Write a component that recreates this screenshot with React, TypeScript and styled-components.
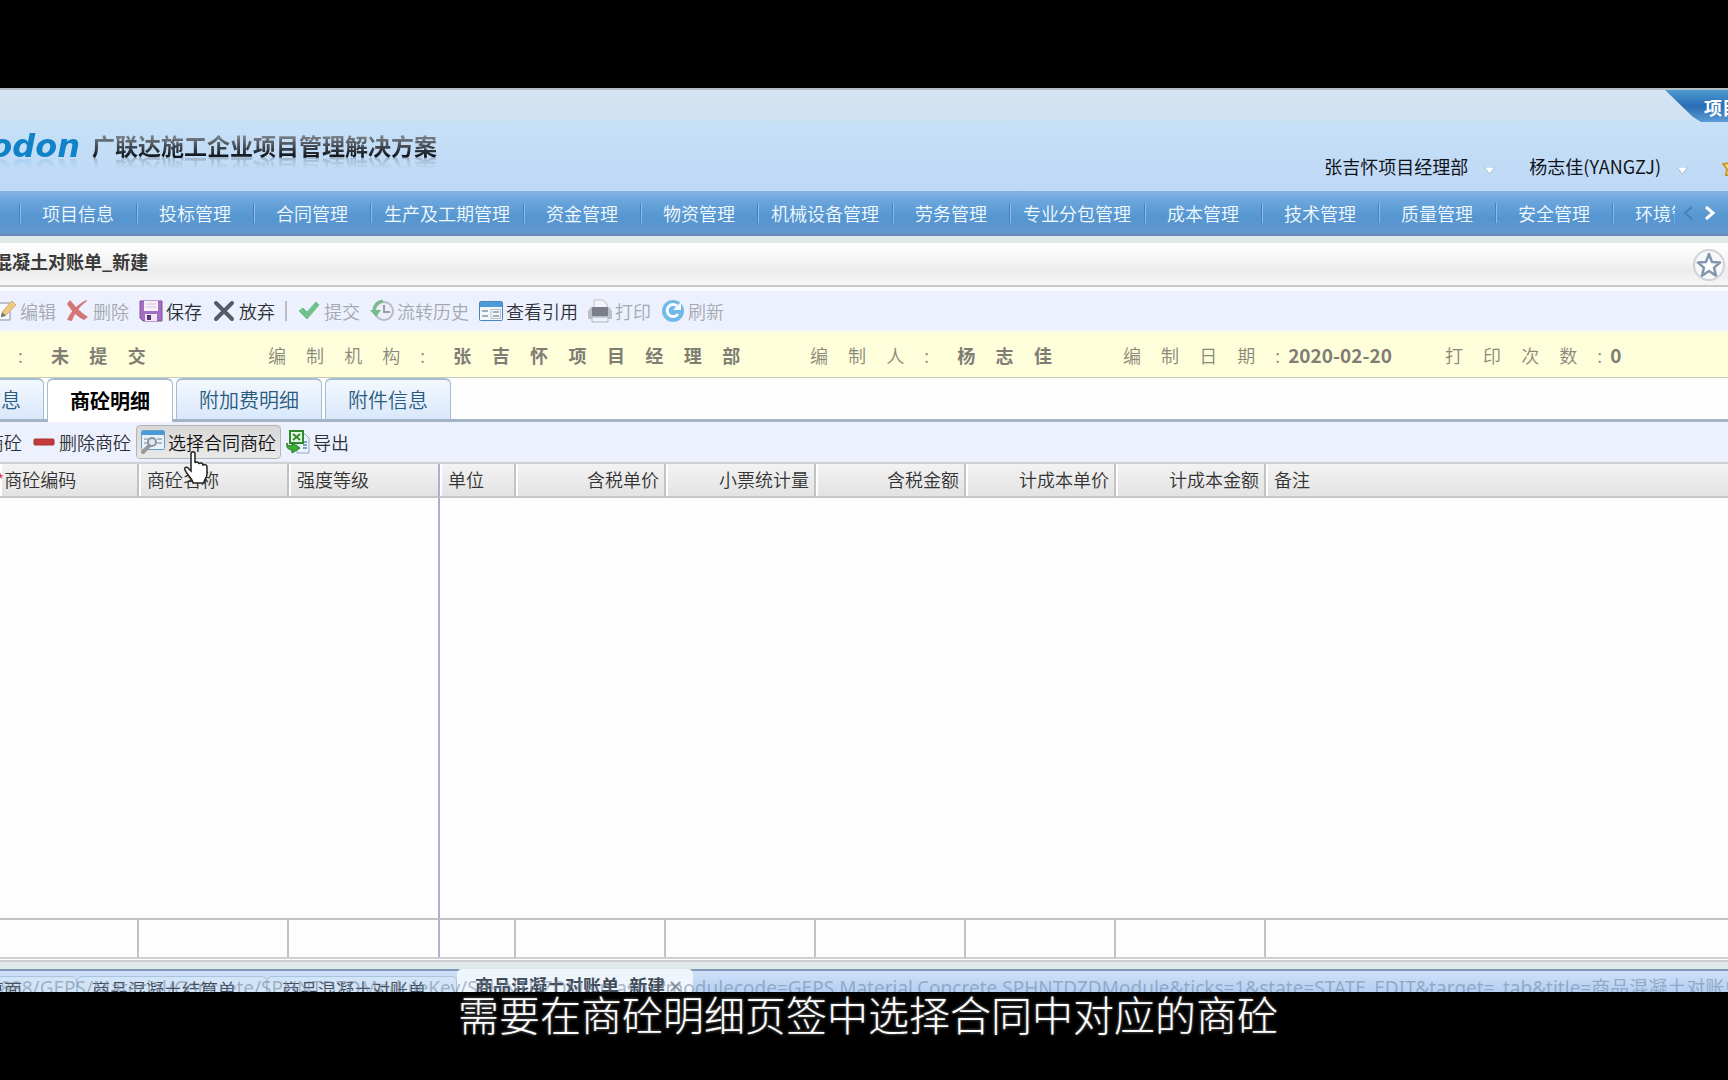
import React from 'react';
import styled, { createGlobalStyle, css } from 'styled-components';

const Global = createGlobalStyle`
  *, *::before, *::after { box-sizing: border-box; }
  body { margin: 0; background: #000; overflow: hidden; }
  button, select, input { font: inherit; }
  button { border: 0; background: none; padding: 0; color: inherit; cursor: pointer; white-space: nowrap; }
  a { color: inherit; text-decoration: none; }
`;

const Frame = styled.div`
  height: 100vh;
  display: flex;
  flex-direction: column;
  background: #000;
  font: 350 18px/24px "Noto Sans CJK SC", "Noto Sans", sans-serif;
  color: #333;
`;

const Screen = styled.div`
  flex: 1;
  min-height: 0;
  margin-top: 88px;
  display: flex;
  flex-direction: column;
  overflow: hidden;
  background: #fdfdfd;
  border-top: 2px solid #b4bcc4;
`;

const Header = styled.header`
  flex: none;
  height: 101px;
  display: flex;
  justify-content: space-between;
  overflow: hidden;
  background: linear-gradient(#d6e4f2, #cfe1f2 28%, #c5e0f7 34%, #bfd8f6);
`;

const Brand = styled.div`
  display: flex;
  align-items: center;
  padding-top: 8px;
`;

const Logo = styled.div`
  width: 80px;
  height: 40px;
  display: flex;
  justify-content: flex-end;
  overflow: hidden;
  font: italic 700 32px/42px "DejaVu Sans", sans-serif;
  color: #0f82c8;
  -webkit-box-reflect: below -14px linear-gradient(transparent 55%, rgba(0, 0, 0, 0.25));
`;

const Slogan = styled.h1`
  margin: 0 0 0 12px;
  font: 700 23px/32px "Noto Sans CJK SC", sans-serif;
  color: transparent;
  background: linear-gradient(#7f878f 20%, #3a4048 60%, #11161c 85%);
  background-clip: text;
  -webkit-background-clip: text;
  -webkit-box-reflect: below -8px linear-gradient(transparent 50%, rgba(0, 0, 0, 0.3));
`;

const HeaderSide = styled.div`
  display: flex;
  flex-direction: column;
  align-items: flex-end;
  justify-content: space-between;
  padding-bottom: 13px;
`;

const Corner = styled.button`
  width: 63px;
  height: 32px;
  padding: 2px 0 0 39px;
  overflow: hidden;
  text-align: left;
  font-weight: 700;
  color: #fff;
  background: linear-gradient(#4d9ad0, #2a6db4 50%, #5a9bd6);
  clip-path: polygon(0 0, 100% 0, 100% 100%, 36px 100%, 28px 27px);
`;

const Account = styled.div`
  display: flex;
  align-items: center;
  font-weight: 400;
  color: #10131a;
`;

const Menu = styled.button`
  display: flex;
  align-items: center;
  gap: 16px;
  margin-right: 34px;
  svg { margin-top: 8px; }
`;

const NavBar = styled.nav`
  flex: none;
  height: 45px;
  display: flex;
  background: linear-gradient(#84b4e4, #6ba5dc 22%, #5595d0 60%, #6398cf 92%, #6688b4);
`;

const NavList = styled.div`
  flex: 1;
  min-width: 0;
  display: flex;
  align-items: center;
  overflow: hidden;
  padding: 0 0 2px 19px;
`;

const NavItem = styled.a`
  flex: none;
  min-width: 117px;
  padding: 0 13px 0 14px;
  text-align: center;
  color: #f2fbff;
  background: linear-gradient(90deg, #4a80bd 1px, #8dbce8 1px, #8dbce8 2px, transparent 2px) left center / 100% 20px no-repeat;
`;

const NavArrows = styled.div`
  flex: none;
  width: 53px;
  display: flex;
  align-items: center;
  gap: 10px;
  padding: 0 0 2px 7px;
  button { height: 24px; }
  svg { display: block; margin: 0 auto; }
`;

const TitleBar = styled.div`
  flex: none;
  height: 51px;
  display: flex;
  align-items: center;
  justify-content: space-between;
  border-top: 7px solid #e0e7e9;
  border-bottom: 2px solid #c8c8c8;
  padding-right: 2px;
  background: linear-gradient(#fff, #f4f4f4 45%, #ececec 65%, #f6f6f6);
`;

const Title = styled.h2`
  margin: 0 0 6px -6px;
  font: 700 18px/24px "Noto Sans CJK SC", sans-serif;
  color: #3a3a3a;
`;

const Star = styled.button`
  width: 34px;
  height: 34px;
  margin-top: 2px;
  svg { display: block; }
`;

const Toolbar = styled.div<{ $main?: boolean }>`
  flex: none;
  height: ${p => (p.$main ? 45 : 40)}px;
  display: flex;
  align-items: center;
  border-top: ${p => (p.$main ? 4 : 0)}px solid #fbfcff;
  border-bottom: ${p => (p.$main ? '2px solid #f4f8f6' : '1px solid #e6ebf6')};
  background: #edf1fd;
  > :first-child { margin-left: ${p => (p.$main ? -12 : -19)}px; }
`;

const Tool = styled.button<{ $on?: boolean }>`
  height: 34px;
  padding: 0 4px;
  display: flex;
  align-items: center;
  gap: 3px;
  border: 1px solid transparent;
  border-radius: 4px;
  color: #2c3038;
  svg { flex: none; }
  &:disabled { color: #a4a8b0; }
  &:disabled svg { opacity: 0.65; }
  ${p => p.$on && css`
    border-color: #b4b4b4;
    background: linear-gradient(#d8d8d8, #e9e9e9);
    color: #111;
  `}
`;

const Divider = styled.span`
  width: 2px;
  height: 20px;
  margin: 0 5px;
  background: #b9bcc4;
`;

const Info = styled.dl`
  flex: none;
  height: 46px;
  margin: 0;
  display: grid;
  grid-template-columns: 268px 542px 313px 322px 1fr;
  align-items: center;
  border-bottom: 1px solid #c9cdbb;
  background: #fefedb;
  color: #8a887a;
  white-space: pre;
  overflow: hidden;
`;

const Field = styled.div<{ $indent?: number; $numeric?: boolean }>`
  display: flex;
  gap: 8px;
  padding-left: ${p => p.$indent ?? 0}px;
  dt, dd { margin: 0; }
  dd {
    font-weight: 700;
    font-size: ${p => (p.$numeric ? 19 : 18)}px;
    color: #807e74;
  }
`;

const Tabs = styled.div`
  flex: none;
  height: 44px;
  display: flex;
  align-items: flex-end;
  gap: 3px;
  border-bottom: 3px solid #a3b4c6;
  > :first-child { margin-left: -82px; }
`;

const Tab = styled.button<{ $on?: boolean }>`
  height: 41px;
  padding: 0 22px;
  border: 1px solid #a5bdd0;
  border-width: 2px 1px 0;
  border-radius: 6px 6px 0 0;
  font-size: 20px;
  color: #2a5a80;
  background: linear-gradient(#f4f8fe, #d9e8fb);
  ${p => p.$on && css`
    height: 44px;
    margin-bottom: -3px;
    font-weight: 700;
    color: #000;
    background: #fff;
  `}
`;

const GridWrap = styled.div`
  flex: 1;
  min-height: 0;
  border-top: 2px solid #cfd3d8;
  border-bottom: 2px solid #d0d0d0;
`;

const Grid = styled.table`
  width: 100%;
  height: 100%;
  table-layout: fixed;
  border-collapse: separate;
  border-spacing: 0;
  background: #fdfdfd;
`;

const Th = styled.th<{ $right?: boolean; $frozen?: boolean }>`
  height: 34px;
  padding: ${p => (p.$right ? '0 5px 2px 0' : '0 0 2px 8px')};
  text-align: ${p => (p.$right ? 'right' : 'left')};
  font-weight: inherit;
  white-space: nowrap;
  border-right: 2px solid ${p => (p.$frozen ? '#a9aedb' : '#c2c2c2')};
  border-bottom: 2px solid #c6c6c6;
  background: linear-gradient(90deg, #fff 2px, transparent 2px), linear-gradient(#f3f3f3, #e3e3e3);
  &:first-child { padding-left: 0; }
  &:last-child { border-right: 0; }
`;

const Required = styled.span`
  color: #e03030;
  margin-left: -4px;
`;

const Blank = styled.td<{ $frozen?: boolean }>`
  padding: 0;
  border-right: ${p => (p.$frozen ? '2px solid #a9aedb' : '0')};
`;

const Sum = styled.td<{ $frozen?: boolean }>`
  height: 39px;
  padding: 0;
  border-top: 2px solid #c2c2c2;
  border-right: 2px solid ${p => (p.$frozen ? '#b0b3cf' : '#c2c2c2')};
  &:last-child { border-right: 0; }
`;

const Dock = styled.div`
  flex: none;
  height: 32px;
  position: relative;
  display: flex;
  align-items: flex-start;
  margin-top: 1px;
  overflow: hidden;
  border-top: 2px solid #cbcbcb;
  background: linear-gradient(#e0e9ea 7px, #8398b4 7px, #8398b4 9px, #cfe1f8 9px, #b4d0f2);
`;

const DockTab = styled.button<{ $w: number; $on?: boolean }>`
  flex: none;
  width: ${p => p.$w}px;
  height: 34px;
  margin-top: ${p => (p.$on ? 7 : 14)}px;
  border-radius: 5px 5px 0 0;
  padding: ${p => (p.$on ? '4px 0 0 18px' : '0 0 0 14px')};
  display: flex;
  gap: 3px;
  text-align: left;
  overflow: hidden;
  color: #3f4a56;
  border: ${p => (p.$on ? '0' : '1px solid #a9c4de')};
  background: ${p => (p.$on ? '#eef5fc' : '#d2e4f6')};
  font-weight: ${p => (p.$on ? 700 : 'inherit')};
  &:first-child { margin-left: -15px; padding-left: 0; }
`;

const Close = styled.span`
  font-weight: 400;
  color: #8a939c;
`;

const Address = styled.div`
  position: absolute;
  left: 0;
  top: 14px;
  white-space: nowrap;
  font: 19px/24px "Noto Sans", "Noto Sans CJK SC", sans-serif;
  color: rgba(110, 130, 155, 0.55);
`;

const Caption = styled.p`
  flex: none;
  height: 88px;
  margin: 0;
  padding-left: 8px;
  text-align: center;
  font: 300 41px/42px "Noto Sans CJK SC", serif;
  color: #fff;
  text-shadow: 0 0 3px #888;
`;

const Pointer = styled.svg`
  position: absolute;
  left: 183px;
  top: 451px;
  pointer-events: none;
`;

const pad = '\u00a0'.repeat(5);
const spread = (s: string) => s.split('').join(pad);

const Ico = ({ children }: { children: React.ReactNode }) => (
  <svg width="24" height="24" viewBox="0 0 24 24" fill="none" aria-hidden="true">{children}</svg>
);

const icons = {
  edit: (
    <Ico>
      <rect x="2" y="4" width="15" height="17" rx="1" fill="#fff" stroke="#a0a8b4" strokeWidth="2" />
      <path d="M8 18l2-6L19 2l4 4-9 9z" fill="#f0b43c" stroke="#c08a30" />
      <path d="M8 18l1-5 4 4z" fill="#333" />
    </Ico>
  ),
  del: (
    <Ico>
      <path d="M4 1c5 6 9 11 18 17l-4 3C10 17 5 11 1 5z" fill="#c8342f" />
      <path d="M21 2C13 8 9 14 6 22l-5-1C5 12 11 6 20 1z" fill="#c8342f" />
    </Ico>
  ),
  save: (
    <Ico>
      <path d="M1 2h22v20H4l-3-3z" fill="#a46fc2" stroke="#80509c" />
      <rect x="5" y="2" width="14" height="10" fill="#f6f1f9" />
      <path d="M7 5h10M7 8h10" stroke="#d5c6e0" />
      <rect x="6" y="15" width="12" height="7" fill="#efe8f3" />
      <rect x="8" y="16" width="4" height="5" fill="#5b3474" />
    </Ico>
  ),
  drop: (
    <Ico><path d="M4 4l16 16M20 4L4 20" stroke="#565b68" strokeWidth="4" strokeLinecap="round" /></Ico>
  ),
  check: (
    <Ico><path d="M2 12l4-3 4 4L19 3l3 3L10 20z" fill="#2fa84f" stroke="#2fa84f" strokeLinejoin="round" /></Ico>
  ),
  history: (
    <Ico>
      <circle cx="14" cy="12" r="9" fill="#eceff2" stroke="#9aa1a8" strokeWidth="2" />
      <path d="M14 6v7h6" stroke="#6b7480" strokeWidth="2" />
      <path d="M13 2C7 3 4 7 4 12" stroke="#35a24d" strokeWidth="3" />
      <path d="M0 11h11l-5 7z" fill="#35a24d" />
    </Ico>
  ),
  view: (
    <Ico>
      <rect x="0.5" y="2.5" width="23" height="19" rx="1" fill="#f2f7fb" stroke="#4a86bd" />
      <rect x="1" y="3" width="22" height="5" fill="#4b9bd8" />
      <path d="M3 12h6M3 17h6M14 13h6M14 17h6" stroke="#a3aeb9" strokeWidth="2" />
      <rect x="12" y="10.5" width="9.500" height="9" stroke="#b6c0ca" />
    </Ico>
  ),
  print: (
    <Ico>
      <path d="M6 1h9l4 4v6H6z" fill="#f4f6f8" stroke="#9aa2ac" />
      <path d="M3 8h3v6h12V8h3l3 4v8H0v-8z" fill="#9fa6b0" />
      <rect x="4" y="8" width="16" height="9" rx="1" fill="#3c424c" />
      <path d="M4 18h16v5H4z" fill="#eef0f3" stroke="#8e96a0" />
    </Ico>
  ),
  refresh: (
    <Ico>
      <circle cx="12" cy="12" r="11" fill="#2f9be0" />
      <path d="M17 15a6 6 0 1 1-1-8" stroke="#fff" strokeWidth="3" />
      <path d="M20 3v8h-8z" fill="#fff" />
    </Ico>
  ),
  minus: (
    <Ico><rect x="2" y="9" width="20" height="6" rx="1" fill="#c53a3c" stroke="#a93034" /></Ico>
  ),
  pick: (
    <Ico>
      <rect x="0.5" y="0.5" width="23" height="19" rx="1" fill="#e9f2f9" stroke="#6c9cc6" />
      <rect x="1" y="1" width="22" height="4" fill="#4b9bd8" />
      <path d="M3 9h4M3 13h4M16 9h5M16 13h5" stroke="#b0bac4" strokeWidth="2" />
      <path d="M2 22l6-6" stroke="#9a9a9a" strokeWidth="4" strokeLinecap="round" />
      <circle cx="11" cy="12" r="4" fill="#dfeaf3" stroke="#8d949c" strokeWidth="2" />
    </Ico>
  ),
  excel: (
    <Ico>
      <path d="M11 4h8l4 4v15H11z" fill="#eaf1f8" stroke="#93a9bd" />
      <path d="M17 12h4M17 15h4M17 18h4" stroke="#7fa3c4" strokeWidth="2" />
      <rect x="4" y="1" width="13" height="12" fill="#e9f8e4" stroke="#2f8a2b" strokeWidth="2" />
      <path d="M7 4l7 6M14 4l-7 6" stroke="#2f8a2b" strokeWidth="2" />
      <path d="M1 13c0 2 2 3 5 3v-3l8 5-8 5v-3c-4 0-6-3-5-7z" fill="#3fae35" stroke="#1f7a1c" />
    </Ico>
  ),
};

const Caret = () => (
  <svg width="11" height="7" viewBox="0 0 11 7" aria-hidden="true">
    <path d="M0 0h11L5.500 7z" fill="#fff" stroke="#a9bccf" />
  </svg>
);

const navItems = ['项目信息', '投标管理', '合同管理', '生产及工期管理', '资金管理', '物资管理', '机械设备管理', '劳务管理', '专业分包管理', '成本管理', '技术管理', '质量管理', '安全管理', '环境管理'];

type Column = { name: string; w?: number; required?: boolean; frozen?: boolean; right?: boolean };

const columns: Column[] = [
  { name: '商砼编码', w: 139, required: true },
  { name: '商砼名称', w: 150 },
  { name: '强度等级', w: 151, frozen: true },
  { name: '单位', w: 76 },
  { name: '含税单价', w: 150, right: true },
  { name: '小票统计量', w: 150, right: true },
  { name: '含税金额', w: 150, right: true },
  { name: '计成本单价', w: 150, right: true },
  { name: '计成本金额', w: 150, right: true },
  { name: '备注' },
];

export default function App() {
  return (
    <Frame>
      <Global />
      <Screen>
        <Header>
          <Brand>
            <Logo>odon</Logo>
            <Slogan>广联达施工企业项目管理解决方案</Slogan>
          </Brand>
          <HeaderSide>
            <Corner>项目</Corner>
            <Account>
              <Menu>张吉怀项目经理部<Caret /></Menu>
              <Menu>杨志佳(YANGZJ)<Caret /></Menu>
              <svg width="6" height="20" viewBox="0 0 6 20" aria-hidden="true">
                <path d="M1 8l7-1 3-6v18l-7 0 1-6z" fill="#fbe08a" stroke="#c79a2e" strokeWidth="2" />
              </svg>
            </Account>
          </HeaderSide>
        </Header>

        <NavBar>
          <NavList>
            {navItems.map(n => <NavItem key={n} href="#">{n}</NavItem>)}
          </NavList>
          <NavArrows>
            <button aria-label="上一页">
              <svg width="12" height="16" viewBox="0 0 12 16" fill="none"><path d="M10 2L3 8l7 6" stroke="#4a7fb8" strokeWidth="2" /></svg>
            </button>
            <button aria-label="下一页">
              <svg width="12" height="16" viewBox="0 0 12 16" fill="none"><path d="M2 2l7 6-7 6" stroke="#fff" strokeWidth="3" /></svg>
            </button>
          </NavArrows>
        </NavBar>

        <TitleBar>
          <Title>混凝土对账单_新建</Title>
          <Star aria-label="收藏">
            <svg width="34" height="34" viewBox="0 0 34 34" fill="none">
              <circle cx="17" cy="17" r="15" fill="#f7f8fa" stroke="#cfd2d6" strokeWidth="2" />
              <path d="M17 6l3 8 8 .6-6 5 2 8L17 23l-7 4.600 2-8-6-5 8-.6z" fill="#fff" stroke="#8496ae" strokeWidth="2.500" strokeLinejoin="round" />
            </svg>
          </Star>
        </TitleBar>

        <Toolbar $main>
          <Tool disabled>{icons.edit}编辑</Tool>
          <Tool disabled>{icons.del}删除</Tool>
          <Tool>{icons.save}保存</Tool>
          <Tool>{icons.drop}放弃</Tool>
          <Divider />
          <Tool disabled>{icons.check}提交</Tool>
          <Tool disabled>{icons.history}流转历史</Tool>
          <Tool>{icons.view}查看引用</Tool>
          <Tool disabled>{icons.print}打印</Tool>
          <Tool disabled>{icons.refresh}刷新</Tool>
        </Toolbar>

        <Info>
          <Field $indent={18}><dt>:{pad}</dt><dd>{spread('未提交')}</dd></Field>
          <Field><dt>{spread('编制机构:')}{pad}</dt><dd>{spread('张吉怀项目经理部')}</dd></Field>
          <Field><dt>{spread('编制人:')}{pad}</dt><dd>{spread('杨志佳')}</dd></Field>
          <Field $numeric><dt>{spread('编制日期:')}</dt><dd>2020-02-20</dd></Field>
          <Field $numeric><dt>{spread('打印次数:')}</dt><dd>0</dd></Field>
        </Info>

        <Tabs>
          <Tab>基本信息</Tab>
          <Tab $on>商砼明细</Tab>
          <Tab>附加费明细</Tab>
          <Tab>附件信息</Tab>
        </Tabs>

        <Toolbar>
          <Tool>商砼</Tool>
          <Tool>{icons.minus}删除商砼</Tool>
          <Tool $on>{icons.pick}选择合同商砼</Tool>
          <Tool>{icons.excel}导出</Tool>
        </Toolbar>

        <GridWrap>
          <Grid>
            <colgroup>{columns.map(c => <col key={c.name} width={c.w} />)}</colgroup>
            <thead>
              <tr>
                {columns.map(c => (
                  <Th key={c.name} $right={c.right} $frozen={c.frozen}>
                    {c.required && <Required>*</Required>}{c.name}
                  </Th>
                ))}
              </tr>
            </thead>
            <tbody>
              <tr>{columns.map(c => <Blank key={c.name} $frozen={c.frozen} />)}</tr>
            </tbody>
            <tfoot>
              <tr>{columns.map(c => <Sum key={c.name} $frozen={c.frozen} />)}</tr>
            </tfoot>
          </Grid>
        </GridWrap>

        <Dock>
          <DockTab $w={92}>桌面</DockTab>
          <DockTab $w={190}>商品混凝土结算单</DockTab>
          <DockTab $w={190}>商品混凝土对账单</DockTab>
          <DockTab $w={236} $on>商品混凝土对账单_新建<Close>✕</Close></DockTab>
          <Address>888/GEPS/Material/Concrete/SPHNTDZDModuleKey/SPHNTDZDMain.aspx?modulecode=GEPS.Material.Concrete.SPHNTDZDModule&amp;ticks=1&amp;state=STATE_EDIT&amp;target=_tab&amp;title=商品混凝土对账单</Address>
        </Dock>
      </Screen>
      <Caption>需要在商砼明细页签中选择合同中对应的商砼</Caption>
      <Pointer width="27" height="33" viewBox="0 0 27 33">
        <path d="M8 3c0-3 4-3 4 0v9c1-2 4-1 4 1 1-2 4-1 4 1 2-1 4 0 4 2v7c0 4-3 5-3 9H10c0-4-6-8-8-13-1-3 2-4 4-1l2 2z" fill="#fff" stroke="#222" strokeWidth="1.500" />
      </Pointer>
    </Frame>
  );
}
